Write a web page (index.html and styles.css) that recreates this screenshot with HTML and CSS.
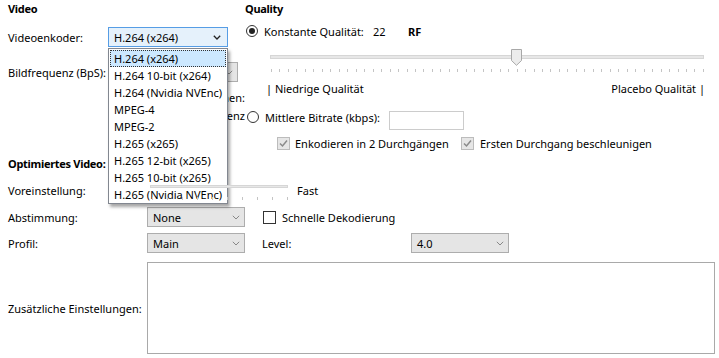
FILE: index.html
```html
<!DOCTYPE html>
<html lang="de">
<head>
<meta charset="UTF-8">
<title>Video</title>
<link rel="stylesheet" href="styles.css">
</head>
<body>
<div class="page">
  <div class="top">
    <div class="video-col">
      <div class="heading">Video</div>
      <div class="row encoder-row">
        <span class="lbl">Videoenkoder:</span>
        <div class="combo combo-hot encoder-combo">H.264 (x264)
          <svg class="chev" width="8" height="5" viewBox="0 0 8 5"><path d="M0.8 0.8 L4 4 L7.2 0.8" fill="none" stroke="#222" stroke-width="1.3"/></svg>
        </div>
      </div>
      <div class="row fps-row">
        <span class="lbl">Bildfrequenz (BpS):</span>
        <div class="combo fps-combo">Gleiche wie Quelle
          <svg class="chev" width="8" height="5" viewBox="0 0 8 5"><path d="M0.8 0.8 L4 4 L7.2 0.8" fill="none" stroke="#888" stroke-width="1"/></svg>
        </div>
      </div>
      <div class="fps-opt opt-first"><span>Optionen ansehen:</span></div>
      <div class="fps-opt"><span>Konstante Bildfrequenz</span></div>

      <ul class="dropdown">
        <li class="sel">H.264 (x264)</li>
        <li>H.264 10-bit (x264)</li>
        <li>H.264 (Nvidia NVEnc)</li>
        <li>MPEG-4</li>
        <li>MPEG-2</li>
        <li>H.265 (x265)</li>
        <li>H.265 12-bit (x265)</li>
        <li>H.265 10-bit (x265)</li>
        <li>H.265 (Nvidia NVEnc)</li>
      </ul>
    </div>

    <div class="quality-col">
      <div class="heading">Quality</div>
      <div class="cq-row">
        <svg class="radio" width="12" height="12" viewBox="0 0 12 12"><circle cx="6" cy="6" r="5.5" fill="#fff" stroke="#333"/><circle cx="6" cy="6" r="3" fill="#222"/></svg>
        <span class="cq-label">Konstante Qualität:</span>
        <span class="cq-value">22</span>
        <span class="cq-unit">RF</span>
      </div>
      <div class="slider rf-slider">
        <div class="track"></div>
        <svg class="thumb" width="11" height="17" viewBox="0 0 11 17"><polygon points="0.5,0.5 10.5,0.5 10.5,11.5 5.5,16.3 0.5,11.5" fill="#ececec" stroke="#a8a8a8"/></svg>
        <div class="ticks">
          <i></i><i></i><i></i><i></i><i></i><i></i><i></i><i></i><i></i><i></i>
          <i></i><i></i><i></i><i></i><i></i><i></i><i></i><i></i><i></i><i></i>
          <i></i><i></i><i></i><i></i><i></i><i></i><i></i><i></i><i></i><i></i>
          <i></i><i></i><i></i><i></i><i></i><i></i><i></i><i></i><i></i><i></i>
          <i></i><i></i><i></i><i></i><i></i><i></i><i></i><i></i><i></i><i></i>
          <i></i><i></i>
        </div>
      </div>
      <div class="scale-labels">
        <span>| Niedrige Qualität</span>
        <span>Placebo Qualität |</span>
      </div>
      <div class="bitrate-row">
        <svg class="radio" width="12" height="12" viewBox="0 0 12 12"><circle cx="6" cy="6" r="5.5" fill="#fff" stroke="#333"/></svg>
        <span class="br-label">Mittlere Bitrate (kbps):</span>
        <div class="textbox bitrate-box"></div>
      </div>
      <div class="check-row">
        <span class="check disabled"><svg width="11" height="11" viewBox="0 0 11 11"><path d="M2 5.5 L4.5 8 L9 2.5" fill="none" stroke="#8a8a8a" stroke-width="1.5"/></svg></span>
        <span class="chk-label pass-label">Enkodieren in 2 Durchgängen</span>
        <span class="check disabled"><svg width="11" height="11" viewBox="0 0 11 11"><path d="M2 5.5 L4.5 8 L9 2.5" fill="none" stroke="#8a8a8a" stroke-width="1.5"/></svg></span>
        <span class="chk-label turbo-label">Ersten Durchgang beschleunigen</span>
      </div>
    </div>
  </div>

  <div class="optimized">
    <div class="heading">Optimiertes Video:</div>
    <div class="row preset-row">
      <span class="lbl wide">Voreinstellung:</span>
      <div class="slider preset-slider">
        <div class="track"></div>
        <div class="ticks"><i></i><i></i><i></i><i></i><i></i><i></i><i></i><i></i><i></i><i></i></div>
      </div>
      <span class="preset-name">Fast</span>
    </div>
    <div class="row tune-row">
      <span class="lbl wide">Abstimmung:</span>
      <div class="combo small-combo">None
        <svg class="chev" width="8" height="5" viewBox="0 0 8 5"><path d="M0.8 0.8 L4 4 L7.2 0.8" fill="none" stroke="#888" stroke-width="1"/></svg>
      </div>
      <span class="check fast-decode"></span>
      <span class="chk-label">Schnelle Dekodierung</span>
    </div>
    <div class="row profile-row">
      <span class="lbl wide">Profil:</span>
      <div class="combo small-combo">Main
        <svg class="chev" width="8" height="5" viewBox="0 0 8 5"><path d="M0.8 0.8 L4 4 L7.2 0.8" fill="none" stroke="#888" stroke-width="1"/></svg>
      </div>
      <span class="level-label">Level:</span>
      <div class="combo small-combo">4.0
        <svg class="chev" width="8" height="5" viewBox="0 0 8 5"><path d="M0.8 0.8 L4 4 L7.2 0.8" fill="none" stroke="#888" stroke-width="1"/></svg>
      </div>
    </div>
    <div class="row extra-row">
      <span class="lbl wide">Zusätzliche Einstellungen:</span>
      <div class="textbox extra-box"></div>
    </div>
  </div>
</div>
</body>
</html>
```

FILE: styles.css
```css
body {
  margin: 0;
  background: #fff;
  font-family: "Noto Sans", sans-serif;
  font-size: 11px;
  color: #000;
}
.page {
  width: 719px;
  height: 358px;
  overflow: hidden;
}
.top {
  display: flex;
  height: 155px;
}
.video-col {
  position: relative;
  width: 237px;
  padding-left: 8px;
}
.quality-col {
  width: 474px;
}
.heading {
  height: 18px;
  line-height: 18px;
  font-weight: bold;
  letter-spacing: -0.3px;
}
.row {
  display: flex;
  align-items: center;
  height: 20px;
}
.lbl {
  width: 100px;
  white-space: nowrap;
}
.lbl.wide {
  width: 139px;
}
.encoder-row {
  margin-top: 9px;
}
.fps-row {
  margin-top: 15px;
}
/* only the tail of these labels shows beside the open list */
.fps-opt {
  display: flex;
  justify-content: flex-end;
  width: 17px;
  height: 18px;
  margin-left: 220px;
  line-height: 18px;
  white-space: nowrap;
  overflow: hidden;
}
.fps-opt span {
  flex: none;
}
.opt-first {
  margin-top: 7px;
}

/* combo boxes */
.combo {
  box-sizing: border-box;
  height: 20px;
  display: flex;
  align-items: center;
  justify-content: space-between;
  padding: 0 4px 0 5px;
  border: 1px solid #adadad;
  background: #e5e5e5;
  white-space: nowrap;
}
.combo-hot {
  border-color: #569de5;
  background: #e5f1fb;
}
.encoder-combo {
  width: 120px;
  padding-right: 6px;
}
.fps-combo {
  width: 130px;
}
.small-combo {
  width: 98px;
}
.chev {
  flex: none;
}

/* open list of the encoder combo */
.dropdown {
  position: absolute;
  left: 108px;
  top: 48px;
  box-sizing: border-box;
  width: 120px;
  height: 156px;
  margin: 0;
  padding: 1px 0 0;
  list-style: none;
  background: #fff;
  border: 1px solid #828790;
  box-shadow: 2px 3px 3px rgba(0, 0, 0, 0.35);
}
.dropdown li {
  box-sizing: border-box;
  height: 17px;
  line-height: 15px;
  margin: 0 1px;
  padding-left: 3px;
  border: 1px solid transparent;
  white-space: nowrap;
}
.dropdown li.sel {
  background: #cce8ff;
  border: 1px dotted #333;
}

/* quality */
.cq-row {
  display: flex;
  align-items: center;
  height: 18px;
  margin-top: 4px;
}
.radio {
  flex: none;
  margin-left: 1px;
  margin-right: 6px;
}
.cq-label {
  width: 109px;
}
.cq-value {
  width: 35px;
}
.cq-unit {
  font-weight: bold;
}
.slider {
  position: relative;
}
.track {
  position: absolute;
  box-sizing: border-box;
  background: #e7e7e7;
  border: 1px solid #d6d6d6;
}
.ticks {
  position: absolute;
  display: flex;
  justify-content: space-between;
}
.ticks i {
  width: 1px;
  height: 3px;
  background: #c4c4c4;
}
.rf-slider {
  width: 434px;
  height: 27px;
  margin: 7px 0 0 25px;
}
.rf-slider .track {
  left: 0;
  top: 8px;
  width: 434px;
  height: 4px;
}
.rf-slider .thumb {
  position: absolute;
  left: 241px;
  top: 2px;
}
.rf-slider .ticks {
  left: 1px;
  top: 22px;
  width: 433px;
}
.scale-labels {
  display: flex;
  justify-content: space-between;
  width: 439px;
  height: 18px;
  line-height: 18px;
  margin: 6px 0 0 21px;
}
.bitrate-row {
  display: flex;
  align-items: flex-start;
  height: 19px;
  margin-top: 13px;
}
.bitrate-row .radio {
  margin-left: 2px;
  margin-top: 0;
}
.br-label {
  width: 124px;
  line-height: 14px;
}
.textbox {
  box-sizing: border-box;
  background: #fff;
  border: 1px solid #a9a9a9;
}
.bitrate-box {
  width: 75px;
  height: 19px;
  border-color: #cccccc;
}
.check-row {
  display: flex;
  align-items: center;
  height: 13px;
  margin-top: 7px;
  line-height: 13px;
}
.check {
  box-sizing: border-box;
  flex: none;
  display: flex;
  align-items: center;
  justify-content: center;
  width: 13px;
  height: 13px;
  border: 1px solid #333;
  background: #fff;
}
.check.disabled {
  border-color: #bcbcbc;
  background: #e6e6e6;
}
.check-row .check:first-child {
  margin-left: 32px;
}
.chk-label {
  margin-left: 5px;
  white-space: nowrap;
}
.pass-label {
  width: 166px;
}
.turbo-label {
  margin-left: 6px;
}

/* optimised video */
.optimized {
  padding-left: 8px;
}
.preset-row {
  margin-top: 7px;
}
.preset-slider {
  width: 145px;
  height: 20px;
}
.preset-slider .track {
  left: 3px;
  top: 5px;
  width: 138px;
  height: 3px;
}
.preset-slider .ticks {
  left: 5px;
  top: 17px;
  width: 136px;
}
.preset-name {
  margin-left: 5px;
}
.tune-row {
  margin-top: 7px;
}
.fast-decode {
  margin-left: 18px;
}
.tune-row .chk-label {
  margin-left: 6px;
}
.profile-row {
  margin-top: 6px;
}
.level-label {
  width: 149px;
  margin-left: 17px;
}
.extra-row {
  height: 92px;
  margin-top: 9px;
}
.extra-box {
  width: 568px;
  height: 92px;
}
```
